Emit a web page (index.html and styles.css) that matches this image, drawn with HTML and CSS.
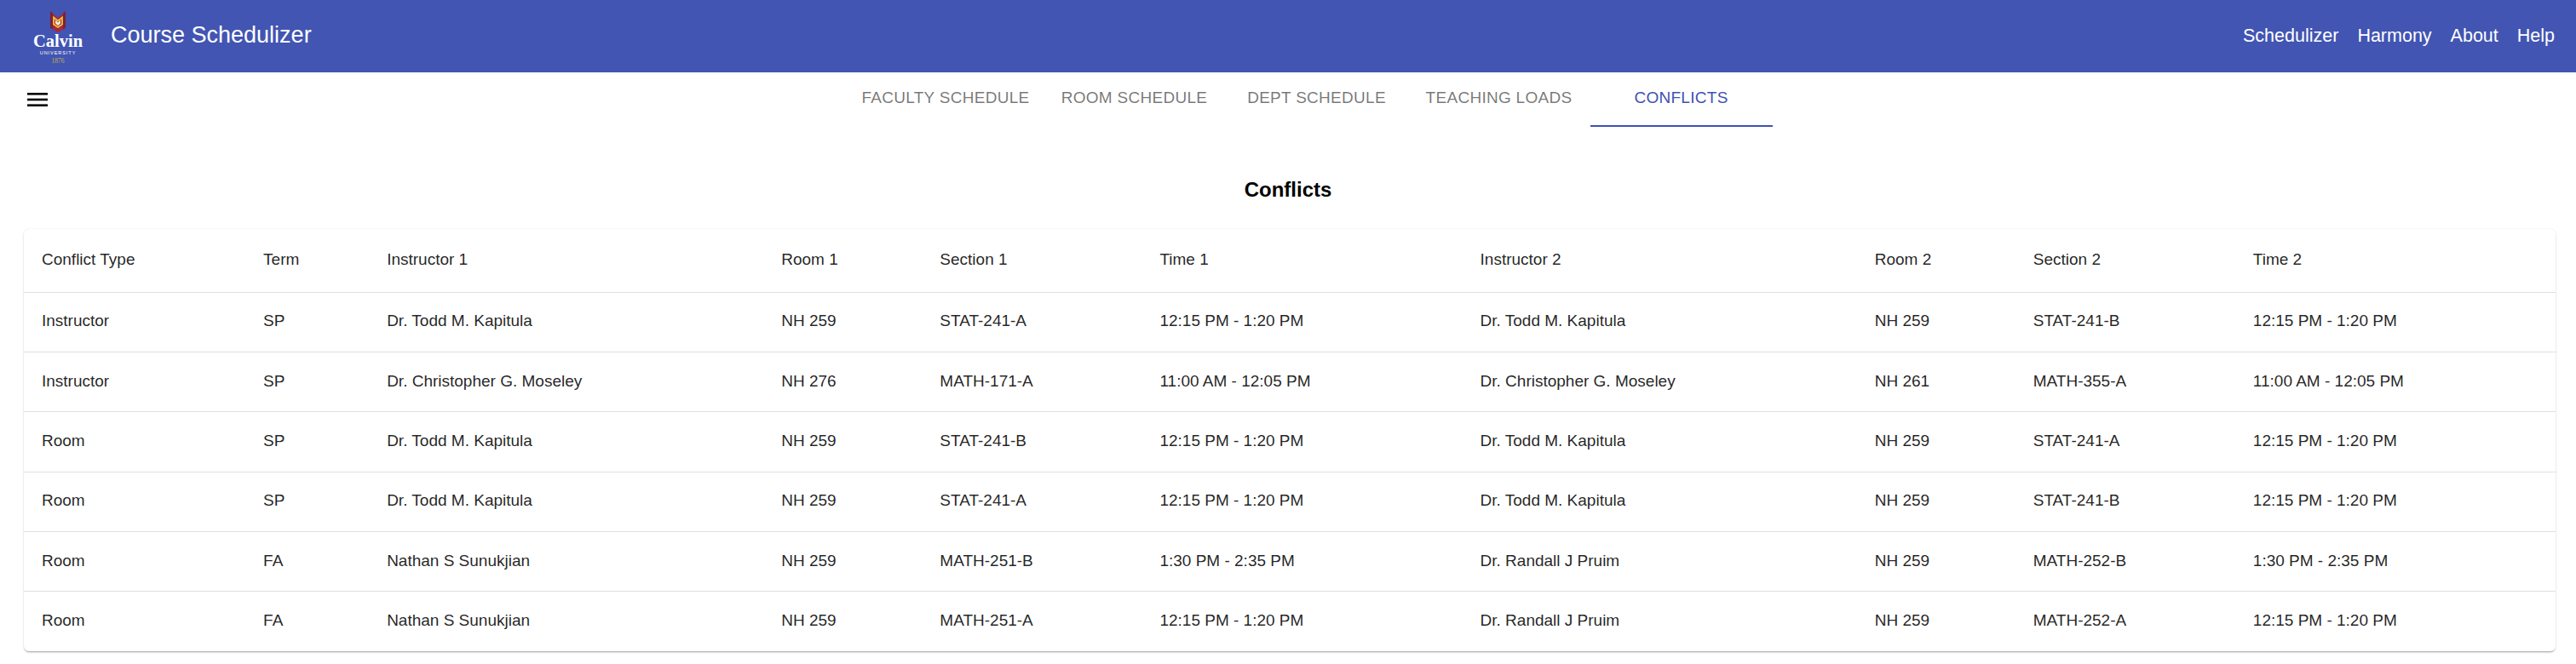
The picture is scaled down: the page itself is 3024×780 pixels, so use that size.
FILE: index.html
```html
<!DOCTYPE html>
<html lang="en">
<head>
	<meta charset="UTF-8">
	<title>Course Schedulizer</title>
	<link rel="stylesheet" href="styles.css">
</head>
<body>

	<header class="appbar">
		<svg class="logo" viewBox="0 -4 64 73" width="64" height="73">
			<path d="M23 3 L32 11 L41 3 V22.5 L32 28 L23 22.5 Z" fill="#a8283c"/>
			<path d="M23 3 L26 6 V24.4 L23 22.5 Z" fill="#7f2036"/>
			<path d="M41 3 L38 6 V24.4 L41 22.5 Z" fill="#7f2036"/>
			<path d="M27 10.5 L32 14.5 L37 10.5 V18.5 L32 22 L27 18.5 Z" fill="none" stroke="#e8c43c" stroke-width="1.8"/>
			<path d="M29 13.5 L32 16.5 L35 13.5 V17.5 L32 20 L29 17.5 Z" fill="#f3ead0"/>
			<text x="32" y="45" class="logo-name">Calvin</text>
			<text x="32" y="54" class="logo-sub">UNIVERSITY</text>
			<text x="32" y="64" class="logo-year">1876</text>
		</svg>
		<h1 class="app-title">Course Schedulizer</h1>
		<nav class="app-links">
			<a href="#">Schedulizer</a>
			<a href="#">Harmony</a>
			<a href="#">About</a>
			<a href="#">Help</a>
		</nav>
	</header>

	<div class="tabbar">
		<button class="menu-btn" aria-label="menu">
			<svg viewBox="0 0 24 16" width="24" height="16">
				<rect x="0" y="0" width="24" height="2.6" fill="#000"/>
				<rect x="0" y="6.7" width="24" height="2.6" fill="#000"/>
				<rect x="0" y="13.4" width="24" height="2.6" fill="#000"/>
			</svg>
		</button>
		<ul class="tabs">
			<li>Faculty Schedule</li>
			<li>Room Schedule</li>
			<li>Dept Schedule</li>
			<li>Teaching Loads</li>
			<li class="current">Conflicts</li>
		</ul>
	</div>

	<h2 class="page-title">Conflicts</h2>

	<div class="card">
		<table>
			<colgroup>
				<col class="c-type"><col class="c-term"><col class="c-name"><col class="c-room"><col class="c-sec"><col class="c-time">
				<col class="c-name"><col class="c-room"><col class="c-sec"><col class="c-time">
			</colgroup>
			<thead>
				<tr>
					<th>Conflict Type</th><th>Term</th><th>Instructor 1</th><th>Room 1</th><th>Section 1</th><th>Time 1</th>
					<th>Instructor 2</th><th>Room 2</th><th>Section 2</th><th>Time 2</th>
				</tr>
			</thead>
			<tbody>
				<tr>
					<td>Instructor</td><td>SP</td><td>Dr. Todd M. Kapitula</td><td>NH 259</td><td>STAT-241-A</td><td>12:15 PM - 1:20 PM</td>
					<td>Dr. Todd M. Kapitula</td><td>NH 259</td><td>STAT-241-B</td><td>12:15 PM - 1:20 PM</td>
				</tr>
				<tr>
					<td>Instructor</td><td>SP</td><td>Dr. Christopher G. Moseley</td><td>NH 276</td><td>MATH-171-A</td><td>11:00 AM - 12:05 PM</td>
					<td>Dr. Christopher G. Moseley</td><td>NH 261</td><td>MATH-355-A</td><td>11:00 AM - 12:05 PM</td>
				</tr>
				<tr>
					<td>Room</td><td>SP</td><td>Dr. Todd M. Kapitula</td><td>NH 259</td><td>STAT-241-B</td><td>12:15 PM - 1:20 PM</td>
					<td>Dr. Todd M. Kapitula</td><td>NH 259</td><td>STAT-241-A</td><td>12:15 PM - 1:20 PM</td>
				</tr>
				<tr>
					<td>Room</td><td>SP</td><td>Dr. Todd M. Kapitula</td><td>NH 259</td><td>STAT-241-A</td><td>12:15 PM - 1:20 PM</td>
					<td>Dr. Todd M. Kapitula</td><td>NH 259</td><td>STAT-241-B</td><td>12:15 PM - 1:20 PM</td>
				</tr>
				<tr>
					<td>Room</td><td>FA</td><td>Nathan S Sunukjian</td><td>NH 259</td><td>MATH-251-B</td><td>1:30 PM - 2:35 PM</td>
					<td>Dr. Randall J Pruim</td><td>NH 259</td><td>MATH-252-B</td><td>1:30 PM - 2:35 PM</td>
				</tr>
				<tr>
					<td>Room</td><td>FA</td><td>Nathan S Sunukjian</td><td>NH 259</td><td>MATH-251-A</td><td>12:15 PM - 1:20 PM</td>
					<td>Dr. Randall J Pruim</td><td>NH 259</td><td>MATH-252-A</td><td>12:15 PM - 1:20 PM</td>
				</tr>
			</tbody>
		</table>
	</div>

</body>
</html>
```

FILE: styles.css
```css
* {
	padding: 0;
	margin: 0;
	box-sizing: border-box;
}

html, body {
	height: 780px;
	overflow: hidden;
}

body {
	background-color: #fff;
	font-family: "Liberation Sans", Arial, sans-serif;
	color: rgba(0, 0, 0, 0.87);
}

ul {
	list-style: none;
}

a {
	color: inherit;
	text-decoration: none;
}

/* top bar */
.appbar {
	height: 85px;
	background-color: #4255b2;
	color: #fff;
	display: flex;
	align-items: center;
	padding: 0 25px 0 36px;
}

.logo {
	display: block;
	margin-right: 30px;
}

.logo-name {
	font-family: "Liberation Serif", serif;
	font-size: 20.5px;
	font-weight: bold;
	fill: #fff;
	text-anchor: middle;
}

.logo-sub {
	font-size: 5.6px;
	letter-spacing: 0.9px;
	fill: #fff;
	text-anchor: middle;
}

.logo-year {
	font-family: "Liberation Serif", serif;
	font-size: 7.5px;
	fill: #c7ae4e;
	text-anchor: middle;
}

.app-title {
	font-size: 27px;
	font-weight: normal;
	padding-bottom: 3px;
}

.app-links {
	margin-left: auto;
	display: flex;
	gap: 22px;
	font-size: 21.5px;
}

/* tabs */
.tabbar {
	height: 64px;
	display: flex;
}

.menu-btn {
	width: 52px;
	padding-left: 32px;
	border: 0;
	background: none;
}

.menu-btn svg {
	display: block;
}

.tabs {
	flex: 1;
	display: flex;
	justify-content: center;
}

.tabs li {
	min-width: 214px;
	height: 64px;
	padding: 0 16px 4px;
	display: flex;
	align-items: center;
	justify-content: center;
	font-size: 19px;
	letter-spacing: 0.28px;
	text-transform: uppercase;
	color: rgba(0, 0, 0, 0.54);
}

.tabs li.current {
	color: #3f51b5;
	padding-bottom: 2px;
	border-bottom: 2px solid #3f51b5;
}

.page-title {
	margin-top: 60px;
	font-size: 24px;
	line-height: 28px;
	font-weight: bold;
	color: #000;
	text-align: center;
}

/* table card */
.card {
	margin: 32px 24px 0 28px;
	background-color: #fff;
	border-radius: 6px;
	box-shadow: 0 2px 2px -1px rgba(0, 0, 0, 0.3), 0 1px 3px 0 rgba(0, 0, 0, 0.1), 0 0 2px 0 rgba(0, 0, 0, 0.07);
	overflow: hidden;
}

table {
	width: 100%;
	table-layout: fixed;
	border-collapse: collapse;
}

.c-type { width: 260px; }
.c-term { width: 145px; }
.c-name { width: 463px; }
.c-room { width: 186px; }
.c-sec { width: 258px; }
.c-time { width: 376px; }

th, td {
	padding: 0 22px 2px 21px;
	height: 70.4px;
	font-size: 19px;
	font-weight: normal;
	text-align: left;
	white-space: nowrap;
	border-bottom: 1px solid #e0e0e0;
}

th {
	height: 74px;
}

tbody tr:last-child td {
	border-bottom: 0;
}
```
